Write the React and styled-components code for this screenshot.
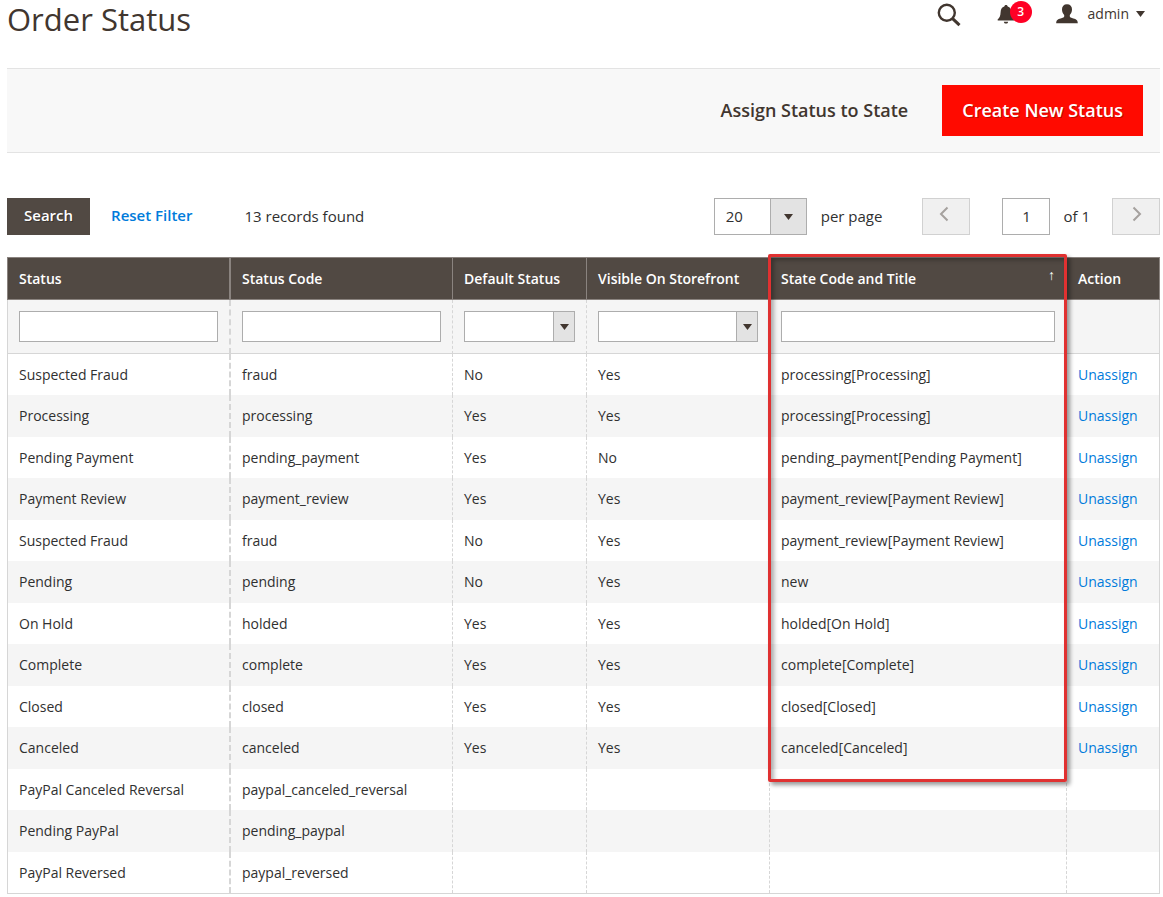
import React from "react";
import styled, { createGlobalStyle, css } from "styled-components";

const GlobalStyle = createGlobalStyle`
  *, *::before, *::after { box-sizing: border-box; }
  body {
    margin: 0;
    background: #fff;
    color: #303030;
    font: 400 14px/20px "Open Sans", "Noto Sans", sans-serif;
  }
  button, input, select { font: inherit; color: inherit; border-radius: 0; margin: 0; }
  button { cursor: pointer; }
`;

const Page = styled.main`
  padding: 0 3px 0 7px;
`;

const Header = styled.header`
  display: flex;
  justify-content: space-between;
  align-items: flex-start;
  height: 68px;
`;

const Title = styled.h1`
  margin: 0;
  color: #41362f;
  font-size: 31px;
  font-weight: 400;
  line-height: 38px;
`;

const HeaderTools = styled.div`
  display: flex;
  align-items: center;
  height: 28px;
  padding-right: 15px;
  color: #41362f;
`;

const IconButton = styled.button`
  display: flex;
  align-items: center;
  padding: 0;
  border: 0;
  background: none;
  position: relative;
  margin-right: ${(p) => p.$gap || 0}px;

  svg { display: block; }
`;

const Badge = styled.span`
  position: absolute;
  left: 13px;
  top: -3px;
  width: 22px;
  height: 22px;
  border-radius: 50%;
  background: #ff0025;
  color: #fff;
  font-size: 12px;
  font-weight: 600;
  line-height: 22px;
  text-align: center;
`;

const UserName = styled.span`
  margin: 0 7px 0 10px;
`;

const ActionBar = styled.div`
  display: flex;
  justify-content: flex-end;
  align-items: center;
  gap: 14px;
  padding: 16px 17px;
  border: solid #e3e3e3;
  border-width: 1px 0;
  background: #f8f8f8;
`;

const ActionButton = styled.button`
  height: 51px;
  padding: 0 20px 2px;
  border: 0;
  background: ${(p) => (p.$primary ? "#ff0a00" : "transparent")};
  color: ${(p) => (p.$primary ? "#fff" : "#41362f")};
  font-size: 18px;
  font-weight: 600;
  text-shadow: ${(p) => (p.$primary ? "1px 1px 0 rgba(0, 0, 0, 0.25)" : "none")};
`;

const Controls = styled.div`
  display: flex;
  align-items: center;
  margin: 45px 0 22px;
  font-size: 15px;
`;

const ControlText = styled.span`
  padding-bottom: 2px;
`;

const Spacer = styled.div`
  flex: 1;
`;

const SearchButton = styled.button`
  height: 37px;
  padding: 0 17px 4px;
  border: 0;
  background: #514943;
  color: #fff;
  font-weight: 600;
  text-shadow: 1px 1px 0 rgba(0, 0, 0, 0.3);
`;

const ResetButton = styled.button`
  height: 37px;
  margin: 0 52px 0 21px;
  padding: 0 0 4px;
  border: 0;
  background: none;
  color: #007bdb;
  font-weight: 600;
`;

const fieldBox = css`
  border: 1px solid #adadad;
  background: #fff;
  color: #303030;
`;

const PageInput = styled.input`
  ${fieldBox}
  width: 48px;
  height: 37px;
  padding: 0 0 2px;
  margin: 0 13px 0 32px;
  text-align: center;
`;

const PagerButton = styled.button`
  display: flex;
  justify-content: center;
  width: 48px;
  height: 37px;
  padding: 7px 4px 0 0;
  margin-left: ${(p) => p.$gap}px;
  border: 1px solid #d1d1d1;
  background: #f0f0f0;

  &:last-child { padding: 7px 0 0 2px; }
`;

const PerPage = styled.label`
  display: flex;
  align-items: center;
  gap: 14px;
`;

const SelectBox = styled.span`
  position: relative;
  display: block;
  width: ${(p) => (p.$large ? "93px" : "100%")};

  select {
    ${fieldBox}
    appearance: none;
    display: block;
    width: 100%;
    height: ${(p) => (p.$large ? 37 : 31)}px;
    padding: 0 11px 2px;
  }
`;

const SelectArrow = styled.span`
  position: absolute;
  top: 1px;
  right: 1px;
  bottom: 1px;
  width: ${(p) => (p.$large ? 36 : 21)}px;
  display: flex;
  align-items: center;
  justify-content: center;
  border-left: 1px solid #adadad;
  background: #e3e3e3;
  pointer-events: none;
`;

const Grid = styled.table`
  width: 100%;
  table-layout: fixed;
  border-collapse: separate;
  border-spacing: 0;
  border-bottom: 1px solid #d6d6d6;
`;

const Column = styled.col`
  width: ${(p) => p.$width}px;
`;

const HeadCell = styled.th`
  position: relative;
  height: 43px;
  padding: 0 11px;
  border: solid #8a837f;
  border-width: 1px 0 1px ${(p) => p.$line}px;
  background: #514943;
  color: #fff;
  font-weight: 600;
  text-align: left;
  white-space: nowrap;

  &:last-child { border-right-width: 1px; }
`;

const SortMark = styled.span`
  float: right;
  font-weight: 400;
  line-height: 12px;
`;

const Highlight = styled.span`
  position: absolute;
  z-index: 1;
  top: -4px;
  left: -2px;
  right: -1px;
  height: 528px;
  border: 3px solid #e03131;
  border-radius: 2px;
  box-shadow: 3px 3px 4px rgba(0, 0, 0, 0.4), inset 3px 3px 4px rgba(0, 0, 0, 0.3);
  pointer-events: none;
`;

const bodyLines = css`
  border-left: ${(p) => p.$line}px dashed #d6d6d6;

  &:first-child { border-left-style: solid; }
  &:last-child { border-right: 1px solid #d6d6d6; }
`;

const FilterCell = styled.td`
  ${bodyLines}
  height: 54px;
  padding: 0 11px;
  border-bottom: 1px solid #d6d6d6;
  background: #f5f5f5;
`;

const FilterInput = styled.input`
  ${fieldBox}
  display: block;
  width: 100%;
  height: 31px;
  padding: 0 8px;
`;

const Cell = styled.td`
  ${bodyLines}
  padding: 1px 11px 0;
`;

const Row = styled.tr`
  height: 42px;
  background: #f5f5f5;

  &:nth-child(odd) {
    height: 41px;
    background: #fff;
  }

  &:nth-child(even) ${Cell} { padding: 0 11px 1px; }
`;

const ActionLink = styled.a`
  color: #007bdb;
  text-decoration: none;
`;

const Caret = ({ width = 9, height = 6 }) => (
  <svg width={width} height={height} viewBox="0 0 9 6" aria-hidden="true">
    <path d="M0 0h9L4.500 6z" fill="#41362f" />
  </svg>
);

const SearchIcon = () => (
  <svg width="24" height="26" viewBox="0 -2 24 26" fill="none" stroke="#41362f" aria-hidden="true">
    <circle cx="9.800" cy="9.800" r="8" strokeWidth="2.400" />
    <path d="M15.600 15.600l6.900 6.600" strokeWidth="3" />
  </svg>
);

const BellIcon = () => (
  <svg width="18" height="20" viewBox="0 -1 18 20" fill="#41362f" aria-hidden="true">
    <path d="M9 0c1 0 1.600.6 1.700 1.600 2.500.8 3.600 2.900 3.700 5.700.1 4 1.200 5.600 2.900 7v1.200H.7v-1.200c1.700-1.400 2.800-3 2.900-7 .1-2.800 1.200-4.900 3.700-5.700C7.400.6 8 0 9 0z" />
    <path d="M6.800 16.700h4.400c-.2 1.200-1 1.900-2.200 1.900s-2-.7-2.200-1.900z" />
  </svg>
);

const UserIcon = () => (
  <svg width="22" height="20" viewBox="0 0 22 20" fill="#41362f" aria-hidden="true">
    <path d="M11 .2c3.200 0 5 2 5 5 0 2.300-.8 4.400-2.200 5.700v1.600c.2 1 1.400 1.300 3.600 1.900 2.700.8 4.400 1.400 4.400 4.800H.2c0-3.400 1.700-4 4.400-4.800 2.200-.6 3.400-.9 3.600-1.900v-1.600C6.800 9.600 6 7.500 6 5.200c0-3 1.800-5 5-5z" />
  </svg>
);

const Chevron = ({ direction }) => (
  <svg width="10" height="16" viewBox="0 0 10 16" fill="none" stroke="#a5a19e" strokeWidth="2" aria-hidden="true">
    <path d={direction === "left" ? "M8.500 1.500L2 8l6.500 6.500" : "M1.500 1.500L8 8l-6.500 6.500"} />
  </svg>
);

const columns = [
  { title: "Status", width: 222, line: 1, filter: "text" },
  { title: "Status Code", width: 223, line: 2, filter: "text" },
  { title: "Default Status", width: 134, line: 1, filter: "select" },
  { title: "Visible On Storefront", width: 183, line: 1, filter: "select" },
  { title: "State Code and Title", width: 297, line: 1, filter: "text", sorted: true },
  { title: "Action", width: 94, line: 1 },
];

const orders = [
  ["Suspected Fraud", "fraud", "No", "Yes", "processing[Processing]"],
  ["Processing", "processing", "Yes", "Yes", "processing[Processing]"],
  ["Pending Payment", "pending_payment", "Yes", "No", "pending_payment[Pending Payment]"],
  ["Payment Review", "payment_review", "Yes", "Yes", "payment_review[Payment Review]"],
  ["Suspected Fraud", "fraud", "No", "Yes", "payment_review[Payment Review]"],
  ["Pending", "pending", "No", "Yes", "new"],
  ["On Hold", "holded", "Yes", "Yes", "holded[On Hold]"],
  ["Complete", "complete", "Yes", "Yes", "complete[Complete]"],
  ["Closed", "closed", "Yes", "Yes", "closed[Closed]"],
  ["Canceled", "canceled", "Yes", "Yes", "canceled[Canceled]"],
  ["PayPal Canceled Reversal", "paypal_canceled_reversal", "", "", ""],
  ["Pending PayPal", "pending_paypal", "", "", ""],
  ["PayPal Reversed", "paypal_reversed", "", "", ""],
];

const ColumnFilter = ({ column }) => {
  if (column.filter === "text") {
    return <FilterInput type="text" aria-label={column.title} />;
  }
  if (column.filter === "select") {
    return (
      <SelectBox>
        <select aria-label={column.title} defaultValue="">
          <option value=""></option>
          <option value="1">Yes</option>
          <option value="0">No</option>
        </select>
        <SelectArrow><Caret /></SelectArrow>
      </SelectBox>
    );
  }
  return null;
};

export default function App() {
  return (
    <>
      <GlobalStyle />
      <Page>
        <Header>
          <Title>Order Status</Title>
          <HeaderTools>
            <IconButton type="button" aria-label="Search" $gap={36}><SearchIcon /></IconButton>
            <IconButton type="button" aria-label="Notifications" $gap={41}>
              <BellIcon />
              <Badge>3</Badge>
            </IconButton>
            <IconButton type="button">
              <UserIcon />
              <UserName>admin</UserName>
              <Caret />
            </IconButton>
          </HeaderTools>
        </Header>

        <ActionBar>
          <ActionButton type="button">Assign Status to State</ActionButton>
          <ActionButton type="button" $primary>Create New Status</ActionButton>
        </ActionBar>

        <Controls>
          <SearchButton type="button">Search</SearchButton>
          <ResetButton type="button">Reset Filter</ResetButton>
          <ControlText>13 records found</ControlText>
          <Spacer />
          <PerPage>
            <SelectBox $large>
              <select defaultValue="20">
                <option>20</option>
                <option>30</option>
                <option>50</option>
              </select>
              <SelectArrow $large><Caret /></SelectArrow>
            </SelectBox>
            <ControlText>per page</ControlText>
          </PerPage>
          <PagerButton type="button" aria-label="Previous page" $gap={40} disabled>
            <Chevron direction="left" />
          </PagerButton>
          <PageInput type="text" aria-label="Page" defaultValue="1" />
          <ControlText>of 1</ControlText>
          <PagerButton type="button" aria-label="Next page" $gap={22} disabled>
            <Chevron direction="right" />
          </PagerButton>
        </Controls>

        <Grid>
          <colgroup>
            {columns.map((c) => <Column key={c.title} $width={c.width} />)}
          </colgroup>
          <thead>
            <tr>
              {columns.map((c) => (
                <HeadCell key={c.title} scope="col" $line={c.line}>
                  {c.title}
                  {c.sorted && <SortMark>↑</SortMark>}
                  {c.sorted && <Highlight />}
                </HeadCell>
              ))}
            </tr>
            <tr>
              {columns.map((c) => (
                <FilterCell key={c.title} $line={c.line}><ColumnFilter column={c} /></FilterCell>
              ))}
            </tr>
          </thead>
          <tbody>
            {orders.map((order) => (
              <Row key={order.join()}>
                {order.map((value, i) => (
                  <Cell key={columns[i].title} $line={columns[i].line}>{value}</Cell>
                ))}
                <Cell $line={1}>
                  {order[4] && <ActionLink href="#unassign">Unassign</ActionLink>}
                </Cell>
              </Row>
            ))}
          </tbody>
        </Grid>
      </Page>
    </>
  );
}
